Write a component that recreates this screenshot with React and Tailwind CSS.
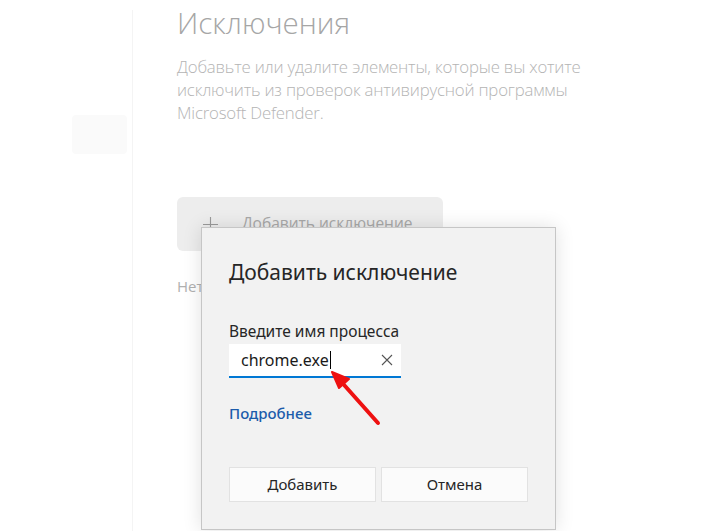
import React from "react";

export default function App() {
  return (
    <div className="relative w-[708px] h-[531px] overflow-hidden bg-white flex font-['Noto_Sans','Open_Sans',sans-serif]">
      {/* sidebar */}
      <div className="w-[133px] shrink-0 pt-[115px] pl-[72px] border-r border-[#f4f4f4] mt-[10px]">
        <div className="w-[55px] h-[39px] -mt-[10px] rounded bg-[#fafafa]" />
      </div>

      {/* main content */}
      <div className="pl-[44px] pt-[5px]">
        <h1 className="text-[29.5px] leading-[36px] font-light text-[#a6a6a6] font-['Open_Sans',sans-serif]">
          Исключения
        </h1>
        <p className="mt-[14px] text-[16.8px] leading-[23px] font-light text-[#b4b4b4] font-['Open_Sans',sans-serif] tracking-[-0.2px]">
          Добавьте или удалите элементы, которые вы хотите
          <br />
          исключить из проверок антивирусной программы
          <br />
          Microsoft Defender.
        </p>
        <button className="mt-[73px] w-[266px] h-[54px] rounded-md bg-[#ededed] flex items-center pl-[26px] gap-[24px] text-[#a8a8a8]">
          <svg width="15" height="15" viewBox="0 0 16 16" stroke="#9a9a9a" strokeWidth="1.2">
            <path d="M8 0v16M0 8h16" />
          </svg>
          <span className="text-[15.5px] font-['Open_Sans',sans-serif]">Добавить исключение</span>
        </button>
        <p className="mt-[24px] text-[15px] text-[#b0b0b0] font-['Open_Sans',sans-serif]">Нет</p>
      </div>

      {/* dialog */}
      <div className="absolute left-[201px] top-[227px] w-[355px] h-[303px] bg-[#f2f2f2] border border-[#c6c6c6] shadow-[0_0_18px_rgba(0,0,0,0.12)] pl-[27px] pt-[30px]">
        <h2 className="text-[21px] leading-[28px] text-[#262626]">Добавить исключение</h2>
        <label className="block mt-[35px] text-[15.5px] leading-[20px] text-[#262626]">
          Введите имя процесса
        </label>
        <div className="mt-[3px] w-[172px] h-[34px] bg-white border-b-2 border-[#0078d4] flex items-center pl-[12px] pr-[8px]">
          <span className="text-[16px] text-[#1a1a1a]">chrome.exe</span>
          <span className="w-[1px] h-[18px] bg-black ml-[1px]" />
          <svg className="ml-auto" width="12" height="12" viewBox="0 0 12 12" stroke="#555" strokeWidth="1.1">
            <path d="M1 1l10 10M11 1L1 11" />
          </svg>
        </div>
        <a className="block mt-[24px] text-[15px] font-medium text-[#1c5cab]">Подробнее</a>
        <div className="mt-[42px] flex gap-[5px]">
          <button className="w-[147px] h-[35px] bg-[#fbfbfb] border border-[#e2e2e2] text-[15px] text-[#262626]">
            Добавить
          </button>
          <button className="w-[147px] h-[35px] bg-[#fbfbfb] border border-[#e2e2e2] text-[15px] text-[#262626]">
            Отмена
          </button>
        </div>
      </div>

      {/* red arrow */}
      <svg className="absolute left-[325px] top-[365px]" width="65" height="65" viewBox="0 0 65 65">
        <path d="M53 58L12 12" stroke="#ee1111" strokeWidth="4" strokeLinecap="round" />
        <path d="M7 7L24 14L14 23Z" fill="#ee1111" stroke="#ee1111" strokeWidth="2" strokeLinejoin="round" />
      </svg>
    </div>
  );
}
